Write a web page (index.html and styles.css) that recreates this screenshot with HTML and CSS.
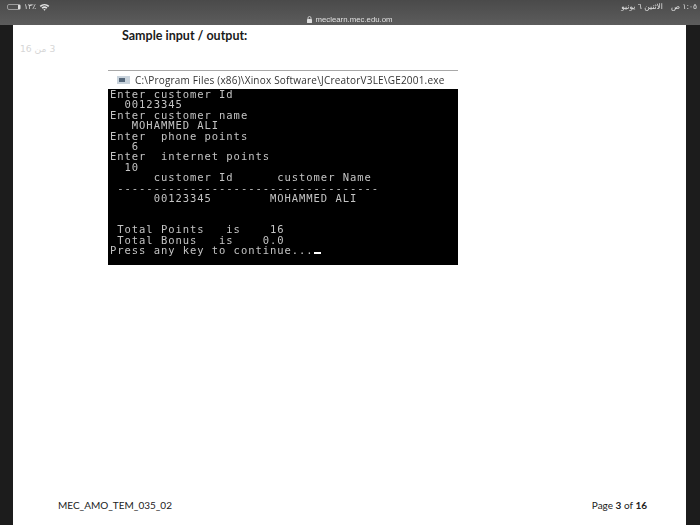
FILE: index.html
```html
<!DOCTYPE html>
<html lang="en">
<head>
<meta charset="utf-8">
<title>Sample input / output</title>
<link rel="stylesheet" href="styles.css">
</head>
<body>
<header class="topbar">
  <div class="status">
    <div class="status-left">
      <span class="battery"><span class="battery-fill"></span></span>
      <span class="status-text" dir="rtl">٪١٣</span>
      <svg class="wifi" width="11" height="8" viewBox="0 0 12 9" aria-hidden="true">
        <path d="M0.6 3.2 A8 8 0 0 1 11.4 3.2 L10.2 4.4 A6.3 6.3 0 0 0 1.8 4.4 Z" fill="#e4e4e4"/>
        <path d="M2.7 5.2 A5 5 0 0 1 9.3 5.2 L8.1 6.4 A3.3 3.3 0 0 0 3.9 6.4 Z" fill="#e4e4e4"/>
        <path d="M4.7 7.2 A2 2 0 0 1 7.3 7.2 L6 8.6 Z" fill="#e4e4e4"/>
      </svg>
    </div>
    <div class="status-right">
      <span class="status-text" dir="rtl">الاثنين ٦ يونيو</span>
      <span class="status-text" dir="rtl">١:٠٥ ص</span>
    </div>
  </div>
  <div class="address">
    <svg class="lock" width="5" height="7" viewBox="0 0 5 7" aria-hidden="true">
      <path d="M1 3V2a1.5 1.5 0 0 1 3 0v1" fill="none" stroke="#ddd" stroke-width=".8"/>
      <rect x="0" y="3" width="5" height="4" rx=".6" fill="#ddd"/>
    </svg>
    <span>meclearn.mec.edu.om</span>
  </div>
</header>
<main class="page">
  <span class="page-indicator" dir="rtl">3 من 16</span>
  <h1 class="heading">Sample input / output:</h1>
  <section class="console">
    <div class="console-title">
      <span class="console-icon"><span class="console-icon-inner"></span></span>
      <span>C:\Program Files (x86)\Xinox Software\JCreatorV3LE\GE2001.exe</span>
    </div>
<pre class="console-body">Enter customer Id
  00123345
Enter customer name
   MOHAMMED ALI
Enter  phone points
   6
Enter  internet points
  10
      customer Id      customer Name
 ------------------------------------
      00123345        MOHAMMED ALI


 Total Points   is    16
 Total Bonus   is    0.0
Press any key to continue...<span class="cursor"></span></pre>
  </section>
  <footer class="footer">
    <span>MEC_AMO_TEM_035_02</span>
    <span>Page <b>3</b> of <b>16</b></span>
  </footer>
</main>
</body>
</html>
```

FILE: styles.css
```css
* { box-sizing: border-box; }
html, body { margin: 0; height: 525px; overflow: hidden; }
body {
  display: flex;
  flex-direction: column;
  background: #1c1c1c;
  font-family: "Lato", "Liberation Sans", sans-serif;
}
.topbar {
  height: 25px;
  flex: none;
  display: flex;
  flex-direction: column;
  background: linear-gradient(#4a4a4a, #5c5c5c);
  color: #e6e6e6;
  filter: blur(0.3px);
}
.status {
  display: flex;
  justify-content: space-between;
  align-items: center;
  height: 13px;
  padding: 0 3px 0 7px;
}
.status-left, .status-right { display: flex; align-items: center; }
.status-left { gap: 3px; }
.status-right { gap: 8px; }
.status-text {
  font-family: "DejaVu Sans", sans-serif;
  font-size: 7.5px;
  line-height: 13px;
  color: #e2e2e2;
}
.battery {
  display: block;
  width: 14px;
  height: 6px;
  border: 1px solid #9c9c9c;
  border-radius: 2px;
}
.battery-fill { display: block; width: 2px; height: 4px; background: #e0e0e0; margin-left: 10px; }
.address {
  display: flex;
  justify-content: center;
  align-items: center;
  gap: 3px;
  height: 12px;
  font-family: "Liberation Sans", sans-serif;
  font-size: 7.8px;
  color: #e0e0e0;
}
.page {
  position: relative;
  flex: none;
  height: 500px;
  margin: 0 14px 0 13px;
  background: #fff;
  display: flex;
  flex-direction: column;
  padding: 3px 0 0 109px;
}
.page-indicator {
  position: absolute;
  left: 7px;
  top: 18px;
  font-family: "DejaVu Sans", sans-serif;
  font-size: 9.2px;
  color: #d6d6d6;
}
.heading {
  margin: 0;
  font-size: 12.5px;
  line-height: 16px;
  font-weight: 700;
  color: #1a1a1a;
}
.console {
  width: 350px;
  margin: 26px 0 0 -14px;
  border-top: 1px solid #a8a8a8;
  filter: blur(0.4px);
}
.console-title {
  height: 18px;
  display: flex;
  align-items: center;
  gap: 5px;
  padding-left: 9px;
  font-family: "Open Sans", "Liberation Sans", sans-serif;
  font-size: 10px;
  letter-spacing: 0.2px;
  white-space: nowrap;
  color: #333;
  background: #fff;
}
.console-icon {
  display: block;
  width: 13px;
  height: 8px;
  background: #c9d3dc;
  padding: 2px 5px 2px 2px;
}
.console-icon-inner { display: block; height: 100%; background: #55677a; }
.console-body {
  margin: 0;
  height: 176px;
  padding: 0 0 0 2px;
  background: #000;
  color: #c4c4c4;
  font-family: "DejaVu Sans Mono", monospace;
  font-size: 10.5px;
  letter-spacing: 0.95px;
  line-height: 10.4px;
}
.cursor {
  display: inline-block;
  width: 7px;
  height: 2px;
  background: #fff;
}
.footer {
  margin: auto 39px 13px -64px;
  display: flex;
  justify-content: space-between;
  font-size: 10px;
  line-height: 14px;
  color: #222;
}
```
